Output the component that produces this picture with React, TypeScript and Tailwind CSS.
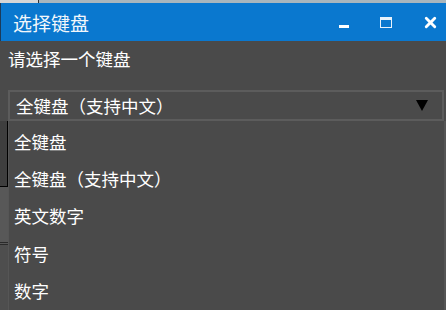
import { X } from "lucide-react";

// Keyboard choices shown in the open dropdown
const options = ["全键盘", "全键盘（支持中文）", "英文数字", "符号", "数字"];

const font = { fontFamily: '"Noto Sans CJK SC", "Microsoft YaHei", sans-serif' };

const App = () => {
  return (
    <div className="w-[446px] h-[310px] overflow-hidden flex flex-col bg-[#4a4a4a] text-white" style={font}>
      {/* Strip of the window behind */}
      <div className="h-[3px] flex">
        <div className="w-[38px] bg-[#d6d6d6]" />
        <div className="w-[1px] bg-[#333]" />
        <div className="flex-1 bg-[#a9b6bd]" />
      </div>

      {/* Title bar */}
      <div className="h-[38px] bg-[#0a78cf] flex items-center pl-[12px] border-l border-[#1b3b5a]">
        <span className="text-[19px] leading-none text-[#f2f7fb]">选择键盘</span>
        <div className="ml-auto flex items-center pr-[7px]">
          <div className="w-[10px] h-[3px] bg-white mt-[8px]" />
          <div className="ml-[31px] w-[12px] h-[11px] border-[1.5px] border-t-[3px] border-[#e8f2fb]" />
          <X size={17} strokeWidth={4} className="ml-[30px] text-white" />
        </div>
      </div>

      {/* Body */}
      <div className="pl-[8px] pt-[7px] text-[17.5px] leading-[22px]">请选择一个键盘</div>

      <div className="mt-[20px] ml-[8px] mr-[2px] h-[31px] border-2 border-[#5c5c5c] flex items-center pl-[6px] pr-[14px]">
        <span className="text-[17.5px] leading-none">全键盘（支持中文）</span>
        <span className="ml-auto w-0 h-0 border-l-[6px] border-r-[6px] border-t-[11px] border-l-transparent border-r-transparent border-t-black" />
      </div>

      {/* Open dropdown over the window behind */}
      <div className="flex-1 flex">
        <div className="w-[8px] flex flex-col">
          <div className="h-[66px] bg-[#3e3e3e] border-r border-b border-black" />
          <div className="h-[58px] bg-[#585858] border-b-[3px] border-double border-[#2a2a2a]" />
          <div className="flex-1 bg-[#4e4e4e]" />
        </div>
        <div className="flex-1 flex flex-col pt-[2px] border-l border-[#565656]">
          {options.map((item) => (
            <div key={item} className="h-[37.4px] flex items-center pl-[5px] text-[17.5px]">
              {item}
            </div>
          ))}
        </div>
        <div className="w-[2px] bg-[#555]" />
      </div>
    </div>
  );
};

export default App;
